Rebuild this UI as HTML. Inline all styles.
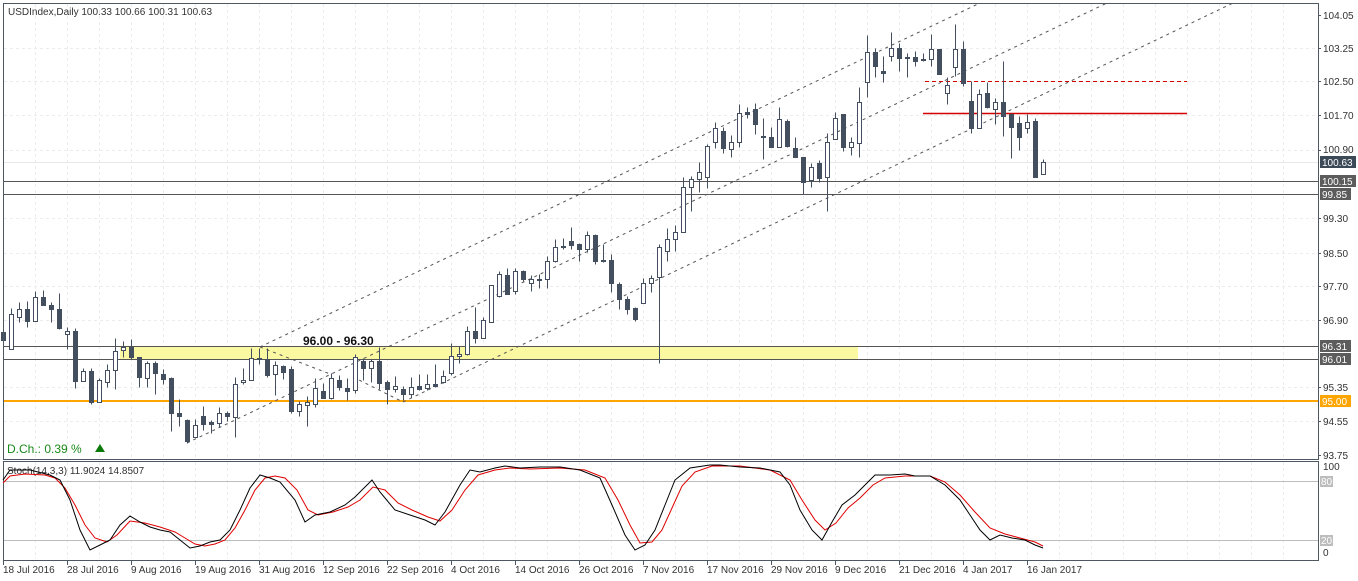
<!DOCTYPE html>
<html><head><meta charset="utf-8"><style>
body{margin:0;background:#fff;width:1358px;height:581px;overflow:hidden}
svg{display:block;font-family:"Liberation Sans",sans-serif}
</style></head><body>
<svg width="1358" height="581" viewBox="0 0 1358 581" xmlns="http://www.w3.org/2000/svg">
<g stroke="#ececec" stroke-dasharray="3,3" stroke-width="1">
<path d="M35.5 4V458M67.5 4V458M99.5 4V458M131.5 4V458M163.5 4V458M195.5 4V458M227.5 4V458M259.5 4V458M291.5 4V458M323.5 4V458M355.5 4V458M387.5 4V458M419.5 4V458M451.5 4V458M483.5 4V458M515.5 4V458M547.5 4V458M579.5 4V458M611.5 4V458M643.5 4V458M675.5 4V458M707.5 4V458M739.5 4V458M771.5 4V458M803.5 4V458M835.5 4V458M867.5 4V458M899.5 4V458M931.5 4V458M963.5 4V458M995.5 4V458M1027.5 4V458M1059.5 4V458M1091.5 4V458M1123.5 4V458M1155.5 4V458M1187.5 4V458M1219.5 4V458M1251.5 4V458M1283.5 4V458"/>
<path d="M35.5 462V559M67.5 462V559M99.5 462V559M131.5 462V559M163.5 462V559M195.5 462V559M227.5 462V559M259.5 462V559M291.5 462V559M323.5 462V559M355.5 462V559M387.5 462V559M419.5 462V559M451.5 462V559M483.5 462V559M515.5 462V559M547.5 462V559M579.5 462V559M611.5 462V559M643.5 462V559M675.5 462V559M707.5 462V559M739.5 462V559M771.5 462V559M803.5 462V559M835.5 462V559M867.5 462V559M899.5 462V559M931.5 462V559M963.5 462V559M995.5 462V559M1027.5 462V559M1059.5 462V559M1091.5 462V559M1123.5 462V559M1155.5 462V559M1187.5 462V559M1219.5 462V559M1251.5 462V559M1283.5 462V559"/>
<path d="M4 48.5H1318M4 81.5H1318M4 115.5H1318M4 150.5H1318M4 218.5H1318M4 253.5H1318M4 286.5H1318M4 320.5H1318M4 387.5H1318M4 421.5H1318"/>
</g>
<path d="M4 162.5H1318" stroke="#e8e8e8"/>
<!-- yellow zone -->
<rect x="120" y="347" width="738" height="12" fill="#fbf8a2"/>
<g stroke="#555" stroke-width="1">
<path d="M4 181.5H1318M4 194.5H1318M4 346.5H1318M4 359.5H1318"/>
</g>
<path d="M4 401H1318" stroke="#ffa500" stroke-width="2"/>
<!-- channel lines -->
<g stroke="#555" stroke-width="1" stroke-dasharray="3,4" fill="none">
<path d="M260 347L980 3M187 443L1107 3M403 402L1233 3M260 347L330 374M353 377L403 402"/>
</g>
<!-- red lines -->
<path d="M925 81.5H1187" stroke="#d40000" stroke-dasharray="4,3"/>
<path d="M923 113.5H1187" stroke="#d40000" stroke-width="1.5"/>
<text x="303" y="345" font-size="12" font-weight="bold" fill="#111">96.00 - 96.30</text>
<!-- candles -->
<g transform="translate(0.5,0.5)" stroke="#434f5e" stroke-width="1">
<path fill="none" d="M3 330V342M11 308V349M19 302V322M27 301V327M35 291V321M43 290V305M51 302V322M59 293V329M67 327V349M75 328V388M83 368V381M91 368V404M99 378V402M107 364V387M115 338V389M123 341V357M131 339V359M139 357V387M147 361V387M155 361V394M163 369V384M171 377V431M179 399V426M187 419V443M195 419V437M203 406V430M211 420V433M219 407V427M227 411V421M235 377V437M243 368V384M251 348V380M259 348V364M267 348V377M275 361V395M283 365V379M291 366V413M299 401V416M307 396V426M315 378V407M323 383V398M331 373V399M339 375V390M347 378V400M355 354V393M363 358V380M371 359V382M379 347V389M387 380V404M395 376V392M403 386V400M411 377V397M419 374V390M427 374V390M435 364V387M443 370V383M451 343V375M459 346V363M467 326V355M475 307V343M483 317V338M491 285V322M499 271V297M507 268V294M515 268V294M523 270V281M531 275V291M539 274V288M547 256V288M555 239V262M563 238V249M571 227V249M579 243V261M587 231V252M595 234V264M603 244V262M611 254V292M619 282V309M627 296V314M635 307V321M643 278V303M651 275V292M659 244V363M667 228V261M675 225V251M683 177V232M691 176V211M699 162V192M707 144V188M715 122V148M723 127V153M731 135V157M739 104V147M747 107V118M755 103V134M763 118V159M771 127V147M779 107V147M787 119V147M795 137V157M803 157V194M811 163V187M819 160V182M827 133V211M835 112V139M843 114V151M851 137V155M859 87V157M867 35V97M875 48V77M883 56V82M891 32V61M899 43V71M907 53V77M915 51V66M923 53V61M931 34V66M939 49V74M947 77V104M955 24V76M963 41V86M971 81V133M979 89V128M987 82V108M995 98V124M1003 61V136M1011 113V158M1019 116V150M1027 114V133M1035 118V177M1043 159V174"/>
<path fill="#434f5e" d="M1 332h4V340h-4zM25 309h4V321h-4zM41 297h4V305h-4zM49 305h4V309h-4zM57 309h4V328h-4zM73 331h4V381h-4zM89 371h4V402h-4zM129 347h4V357h-4zM137 357h4V377h-4zM153 363h4V373h-4zM161 374h4V379h-4zM169 378h4V413h-4zM177 413h4V416h-4zM185 420h4V441h-4zM201 416h4V424h-4zM209 422h4V424h-4zM225 413h4V416h-4zM265 359h4V375h-4zM281 366h4V372h-4zM289 369h4V411h-4zM321 391h4V398h-4zM337 380h4V387h-4zM345 388h4V391h-4zM361 361h4V368h-4zM377 361h4V383h-4zM385 382h4V389h-4zM401 389h4V394h-4zM417 386h4V389h-4zM433 384h4V386h-4zM473 331h4V338h-4zM505 275h4V294h-4zM521 271h4V279h-4zM561 246h4V247h-4zM569 241h4V245h-4zM577 244h4V249h-4zM593 235h4V261h-4zM601 260h4V261h-4zM609 260h4V283h-4zM617 284h4V299h-4zM625 299h4V309h-4zM633 308h4V319h-4zM721 131h4V148h-4zM745 112h4V114h-4zM753 109h4V124h-4zM761 136h4V137h-4zM769 137h4V147h-4zM785 121h4V146h-4zM793 148h4V157h-4zM801 157h4V182h-4zM817 163h4V178h-4zM841 114h4V147h-4zM873 52h4V66h-4zM881 71h4V73h-4zM897 48h4V58h-4zM913 57h4V61h-4zM921 59h4V60h-4zM937 49h4V74h-4zM961 49h4V83h-4zM969 101h4V128h-4zM985 93h4V107h-4zM1001 102h4V116h-4zM1009 114h4V127h-4zM1017 123h4V137h-4zM1033 121h4V177h-4z"/>
<path fill="#fff" d="M9 314h4V349h-4zM17 309h4V317h-4zM33 297h4V321h-4zM65 331h4V334h-4zM81 371h4V381h-4zM97 380h4V402h-4zM105 370h4V382h-4zM113 351h4V370h-4zM121 347h4V350h-4zM145 363h4V378h-4zM193 425h4V437h-4zM217 413h4V423h-4zM233 384h4V417h-4zM241 380h4V382h-4zM249 358h4V380h-4zM257 358h4V359h-4zM273 365h4V374h-4zM297 404h4V411h-4zM305 402h4V405h-4zM313 388h4V404h-4zM329 378h4V398h-4zM353 357h4V390h-4zM369 361h4V368h-4zM393 386h4V389h-4zM409 387h4V394h-4zM425 384h4V388h-4zM441 376h4V382h-4zM449 356h4V373h-4zM457 354h4V356h-4zM465 331h4V354h-4zM481 320h4V338h-4zM489 285h4V322h-4zM497 274h4V296h-4zM513 271h4V291h-4zM529 279h4V283h-4zM537 279h4V280h-4zM545 261h4V279h-4zM553 247h4V261h-4zM585 235h4V249h-4zM641 283h4V303h-4zM649 278h4V283h-4zM657 247h4V277h-4zM665 239h4V251h-4zM673 232h4V239h-4zM681 187h4V232h-4zM689 179h4V187h-4zM697 172h4V179h-4zM705 146h4V177h-4zM713 128h4V142h-4zM729 142h4V149h-4zM737 113h4V142h-4zM777 119h4V147h-4zM809 167h4V180h-4zM825 142h4V177h-4zM833 118h4V139h-4zM849 142h4V147h-4zM857 102h4V143h-4zM865 52h4V82h-4zM889 48h4V56h-4zM905 57h4V58h-4zM929 49h4V59h-4zM945 85h4V93h-4zM953 49h4V67h-4zM977 94h4V128h-4zM993 102h4V109h-4zM1025 122h4V128h-4zM1041 162h4V174h-4z"/>
</g>
<!-- frames -->
<rect x="3.5" y="3.5" width="1315" height="456" fill="none" stroke="#4e5863"/>
<rect x="3.5" y="461.5" width="1315" height="99" fill="none" stroke="#4e5863"/>
<text x="8" y="15" font-size="10" fill="#333">USDIndex,Daily  100.33 100.66 100.31 100.63</text>
<text x="7" y="453" font-size="12" fill="#1a8a1a">D.Ch.: 0.39 %</text>
<path d="M95 452l5-8 5 8z" fill="#0a7a0a"/>
<!-- stoch levels -->
<path d="M4 481.5H1318M4 540.5H1318" stroke="#bdbdbd"/>
<text x="7" y="474" font-size="10" fill="#333">Stoch(14,3,3) 11.9024 14.8507</text>
<polyline fill="none" stroke="#e00000" stroke-width="1" points="3,483 10,476 25,474 45,475 55,478 65,488 75,505 85,525 95,538 107,542 117,535 130,521 145,523 160,527 175,532 185,538 195,544 205,546 215,544 225,540 235,528 245,510 255,490 265,478 275,476 285,478 297,490 308,510 318,515 333,512 348,507 360,500 373,487 385,490 398,503 412,510 428,517 440,521 452,510 465,490 478,475 495,470 510,468 530,469 560,468 585,470 605,478 618,500 630,525 640,543 652,542 662,530 672,508 682,486 695,472 712,466 740,466 770,470 790,480 802,500 815,520 825,530 836,523 848,508 860,498 873,485 885,478 905,476 930,476 945,482 960,495 975,512 990,528 1005,534 1020,538 1035,542 1043,546"/>
<polyline fill="none" stroke="#000" stroke-width="1" points="3,480 10,470 30,470 50,475 60,480 70,500 80,530 90,550 100,545 110,540 120,525 130,516 140,522 150,527 160,530 170,532 180,540 190,548 200,546 210,542 220,540 230,530 240,510 250,488 260,475 270,478 280,482 295,500 305,522 315,515 330,512 345,505 355,497 372,480 380,492 395,510 410,515 425,520 435,525 445,512 460,485 470,470 480,472 495,468 505,466 520,468 540,467 560,467 580,470 600,478 612,505 625,535 635,550 645,545 655,530 665,505 675,480 690,468 710,465 720,465 740,467 760,468 780,472 790,485 800,510 812,530 822,540 832,522 842,505 855,495 865,485 875,475 890,475 905,474 915,476 930,476 945,485 960,500 970,515 980,530 990,540 1000,535 1012,538 1025,540 1035,545 1043,548"/>
<!-- right axis labels -->
<g font-size="10" fill="#333">
<path d="M1318 15.5h3M1318 48.5h3M1318 81.5h3M1318 115.5h3M1318 150.5h3M1318 218.5h3M1318 253.5h3M1318 286.5h3M1318 320.5h3M1318 387.5h3M1318 421.5h3M1318 455.5h3" stroke="#4e5863"/>
<text x="1323" y="19">104.05</text>
<text x="1323" y="52">103.25</text>
<text x="1323" y="85">102.50</text>
<text x="1323" y="119">101.70</text>
<text x="1323" y="153">100.90</text>
<text x="1323" y="222">99.30</text>
<text x="1323" y="257">98.50</text>
<text x="1323" y="290">97.70</text>
<text x="1323" y="324">96.90</text>
<text x="1323" y="391">95.35</text>
<text x="1323" y="425">94.55</text>
<text x="1323" y="459">93.75</text>
<text x="1323" y="470">100</text>
<text x="1323" y="556">0</text>
</g>
<g font-size="10" fill="#fff">
<rect x="1320" y="156" width="36" height="12" fill="#3c4a58"/><text x="1322" y="166">100.63</text>
<rect x="1320" y="175" width="36" height="12" fill="#5c5c5c"/><text x="1322" y="185">100.15</text>
<rect x="1320" y="188" width="31" height="12" fill="#5c5c5c"/><text x="1322" y="198">99.85</text>
<rect x="1320" y="340" width="31" height="12" fill="#5c5c5c"/><text x="1322" y="350">96.31</text>
<rect x="1320" y="353" width="31" height="12" fill="#5c5c5c"/><text x="1322" y="363">96.01</text>
<rect x="1320" y="395" width="31" height="12" fill="#ffa500"/><text x="1322" y="405">95.00</text>
<rect x="1320" y="476" width="13" height="11" fill="#bdbdbd"/><text x="1321" y="485">80</text>
<rect x="1320" y="535" width="13" height="11" fill="#bdbdbd"/><text x="1321" y="544">20</text>
</g>
<!-- date axis -->
<g font-size="10" fill="#333">
<path d="M3.5 561v4M67.5 561v4M131.5 561v4M195.5 561v4M259.5 561v4M323.5 561v4M387.5 561v4M451.5 561v4M515.5 561v4M579.5 561v4M643.5 561v4M707.5 561v4M771.5 561v4M835.5 561v4M899.5 561v4M963.5 561v4M1027.5 561v4" stroke="#4e5863"/>
<text x="3" y="573">18 Jul 2016</text>
<text x="67" y="573">28 Jul 2016</text>
<text x="131" y="573">9 Aug 2016</text>
<text x="195" y="573">19 Aug 2016</text>
<text x="259" y="573">31 Aug 2016</text>
<text x="323" y="573">12 Sep 2016</text>
<text x="387" y="573">22 Sep 2016</text>
<text x="451" y="573">4 Oct 2016</text>
<text x="515" y="573">14 Oct 2016</text>
<text x="579" y="573">26 Oct 2016</text>
<text x="643" y="573">7 Nov 2016</text>
<text x="707" y="573">17 Nov 2016</text>
<text x="771" y="573">29 Nov 2016</text>
<text x="835" y="573">9 Dec 2016</text>
<text x="899" y="573">21 Dec 2016</text>
<text x="963" y="573">4 Jan 2017</text>
<text x="1027" y="573">16 Jan 2017</text>
</g>
</svg>
</body></html>
